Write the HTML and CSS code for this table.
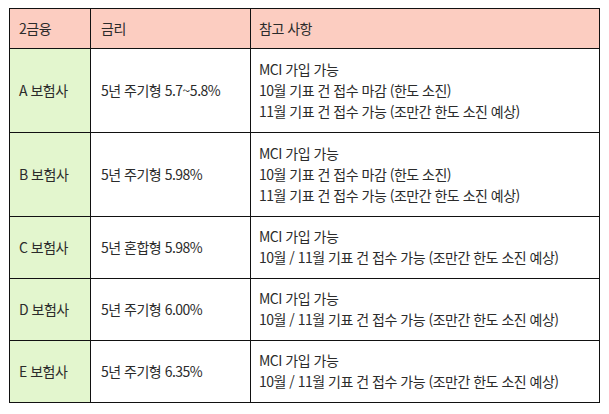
FILE: index.html
```html
<!DOCTYPE html>
<html lang="ko">
<head>
<meta charset="utf-8">
<link rel="stylesheet" href="styles.css">
</head>
<body>
<div class="wrap">
<table class="rates">
  <colgroup><col class="c1"><col class="c2"><col class="c3"></colgroup>
  <thead>
    <tr><th>2금융</th><th>금리</th><th>참고 사항</th></tr>
  </thead>
  <tbody>
    <tr class="tall"><td class="co">A 보험사</td><td>5년 주기형 5.7~5.8%</td><td>MCI 가입 가능<br>10월 기표 건 접수 마감 (한도 소진)<br>11월 기표 건 접수 가능 (조만간 한도 소진 예상)</td></tr>
    <tr class="tall"><td class="co">B 보험사</td><td>5년 주기형 5.98%</td><td>MCI 가입 가능<br>10월 기표 건 접수 마감 (한도 소진)<br>11월 기표 건 접수 가능 (조만간 한도 소진 예상)</td></tr>
    <tr class="short"><td class="co">C 보험사</td><td>5년 혼합형 5.98%</td><td>MCI 가입 가능<br>10월 / 11월 기표 건 접수 가능 (조만간 한도 소진 예상)</td></tr>
    <tr class="short"><td class="co">D 보험사</td><td>5년 주기형 6.00%</td><td>MCI 가입 가능<br>10월 / 11월 기표 건 접수 가능 (조만간 한도 소진 예상)</td></tr>
    <tr class="short"><td class="co">E 보험사</td><td>5년 주기형 6.35%</td><td>MCI 가입 가능<br>10월 / 11월 기표 건 접수 가능 (조만간 한도 소진 예상)</td></tr>
  </tbody>
</table>
</div>
</body>
</html>
```

FILE: styles.css
```css
html, body {
  margin: 0;
  padding: 0;
  background: #ffffff;
}
.wrap {
  padding: 8px 0 0 9px;
}
.rates {
  border-collapse: collapse;
  table-layout: fixed;
  width: 590px;
  font-family: "Noto Sans CJK KR", "Noto Sans", sans-serif;
  font-size: 14px;
  letter-spacing: -0.5px;
  line-height: 21px;
  color: #2b2b2b;
}
.c1 { width: 81px; }
.c2 { width: 160px; }
.c3 { width: 349px; }
.rates th,
.rates td {
  border: 1px solid #111;
  text-align: left;
  vertical-align: middle;
  font-weight: normal;
  padding: 9px 8px 9px 9px;
}
.rates th {
  background: #fccdc1;
}
.rates td:nth-child(2) { padding-left: 10px; }
.rates td:nth-child(3), .rates th:nth-child(3) { padding-left: 8px; }
.rates th:nth-child(2) { padding-left: 10px; }
.tall td { padding-top: 10px; padding-bottom: 10px; }
.short td { padding-top: 9px; padding-bottom: 10px; }
.rates td.co {
  background: #e3f6ce;
}
```
